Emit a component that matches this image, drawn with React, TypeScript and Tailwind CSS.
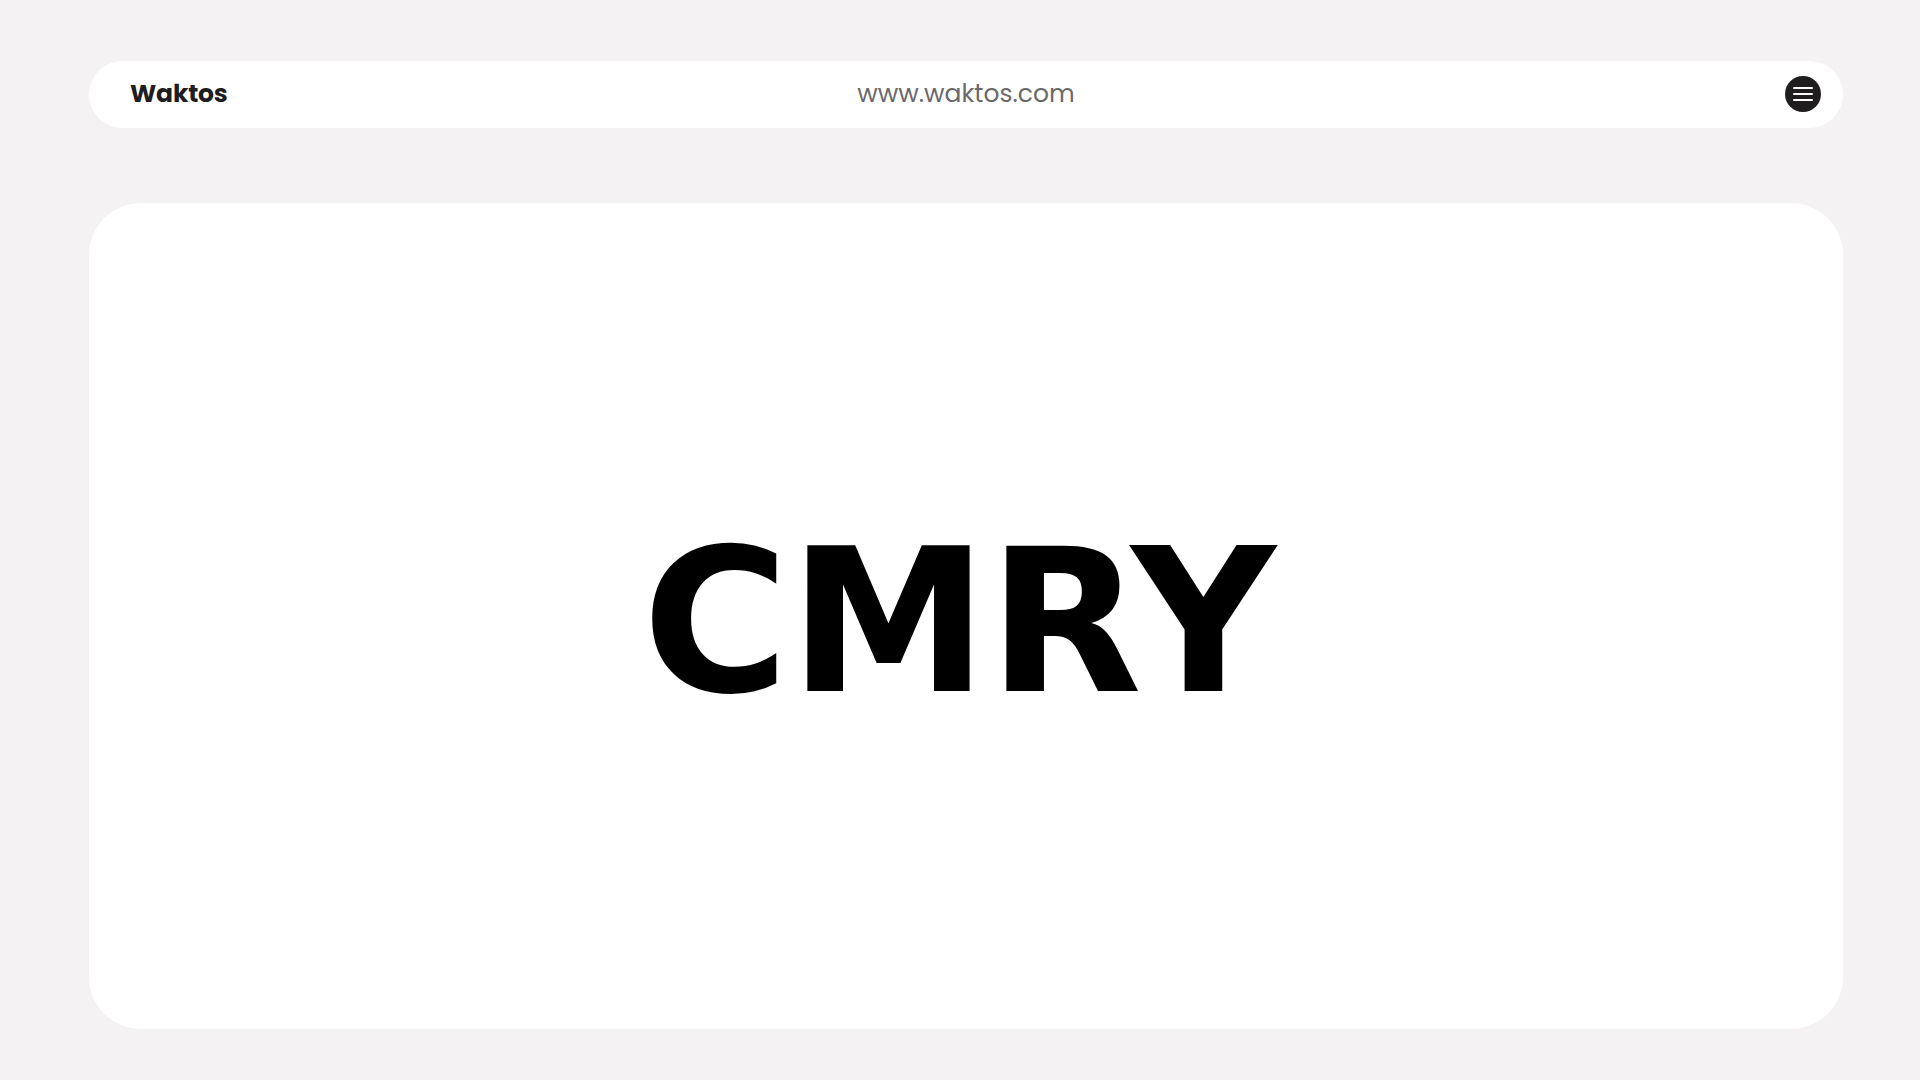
export default function App() {
  return (
    <div className="min-h-screen w-full bg-[#f4f2f3] pl-[89px] pr-[77px] pt-[61px]">
      <header className="grid h-[67px] grid-cols-3 items-center rounded-full bg-white px-[22px] pb-[2px]">
        <div className="pl-[19px] font-['Poppins','Inter',sans-serif] text-[25px] font-bold tracking-[-0.2px] text-[#1f1d1e]">
          Waktos
        </div>
        <div className="text-center font-['Poppins','Inter',sans-serif] text-[25px] font-normal text-[#6b6a6b]">
          www.waktos.com
        </div>
        <div className="flex justify-end">
          <button className="flex h-9 w-9 flex-col items-center justify-center gap-[4px] rounded-full bg-[#1f1d1e]">
            <span className="block h-[2px] w-5 rounded bg-white" />
            <span className="block h-[2px] w-5 rounded bg-white" />
            <span className="block h-[2px] w-5 rounded bg-white" />
          </button>
        </div>
      </header>

      <main className="mt-[75px] flex h-[826px] items-center justify-center rounded-[52px] bg-white">
        <h1 className="pr-[14px] pt-3 font-['DejaVu_Sans',sans-serif] text-[200px] font-bold leading-none text-black">
          CMRY
        </h1>
      </main>
    </div>
  )
}
